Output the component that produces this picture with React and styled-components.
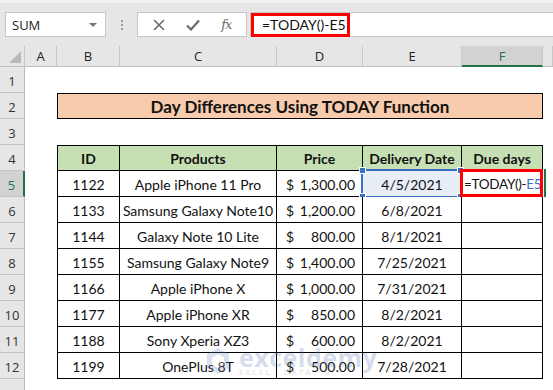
import React from "react";
import styled, { createGlobalStyle } from "styled-components";

const GlobalStyle = createGlobalStyle`
  body {
    margin: 0;
    background: #fff;
    font-family: "Lato", "Liberation Sans", sans-serif;
  }
`;

const COLS = "25px 32px 63px 157px 86px 99px 81px 1fr";

const items = [
  [1122, "Apple iPhone 11 Pro", "1,300.00", "4/5/2021"],
  [1133, "Samsung Galaxy Note10", "1,200.00", "6/8/2021"],
  [1144, "Galaxy Note 10 Lite", "800.00", "8/1/2021"],
  [1155, "Samsung Galaxy Note9", "1,400.00", "7/25/2021"],
  [1166, "Apple iPhone X", "1,000.00", "7/31/2021"],
  [1177, "Apple iPhone XR", "850.00", "8/2/2021"],
  [1188, "Sony Xperia XZ3", "600.00", "8/2/2021"],
  [1199, "OnePlus 8T", "500.00", "7/28/2021"]
];

const Page = styled.div`
  width: 553px;
  height: 390px;
  overflow: hidden;
  display: flex;
  flex-direction: column;
  background: #fff;
`;

const Toolbar = styled.div`
  height: 46px;
  flex: none;
  box-sizing: border-box;
  display: flex;
  align-items: flex-start;
  padding: 9px 0 0 5px;
  background: #e6e6e6;
  border-top: 3px solid #f3f3f3;
`;

const NameBox = styled.div`
  width: 101px;
  height: 25px;
  box-sizing: border-box;
  background: #fff;
  border: 1px solid #c6c6c6;
  display: flex;
  align-items: center;
  justify-content: space-between;
  padding: 0 8px 0 6px;
  font-family: "Open Sans", sans-serif;
  font-size: 13px;
  color: #222;
`;

const Caret = styled.span`
  width: 0;
  height: 0;
  border-left: 4px solid transparent;
  border-right: 4px solid transparent;
  border-top: 4px solid #777;
`;

const Grip = styled.div`
  width: 31px;
  height: 25px;
  display: flex;
  flex-direction: column;
  align-items: center;
  justify-content: center;
  gap: 2px;
  span {
    width: 2px;
    height: 2px;
    background: #9a9a9a;
  }
`;

const ButtonBox = styled.div`
  width: 110px;
  height: 25px;
  box-sizing: border-box;
  background: #fff;
  border: 1px solid #c6c6c6;
  display: flex;
  align-items: center;
  justify-content: space-around;
  padding: 0 4px;
  color: #6b6b6b;
`;

const Fx = styled.span`
  font-family: "DejaVu Serif", "Liberation Serif", serif;
  font-style: italic;
  font-size: 13px;
  color: #6b6b6b;
  letter-spacing: -1px;
`;

const FormulaBar = styled.div`
  flex: 1;
  margin-left: 3px;
  height: 25px;
  box-sizing: border-box;
  background: #fff;
  border: 1px solid #c6c6c6;
  border-right: none;
  display: flex;
  align-items: center;
`;

const Highlight = styled.div`
  width: 99px;
  height: 24px;
  box-sizing: border-box;
  border: 3px solid #ff0000;
  display: flex;
  align-items: center;
  padding-left: 8px;
  font-size: 14px;
  white-space: nowrap;
  color: #111;
`;

const Sheet = styled.div`
  position: relative;
  flex: 1;
`;

const Row = styled.div`
  display: grid;
  grid-template-columns: ${COLS};
  height: ${p => (p.$head ? 21 : 26)}px;
`;

const Corner = styled.div`
  background: #e6e6e6;
  border-right: 1px solid #c8c8c8;
  border-bottom: 1px solid #bdbdbd;
  position: relative;
  &:after {
    content: "";
    position: absolute;
    right: 3px;
    bottom: 3px;
    border-left: 12px solid transparent;
    border-bottom: 12px solid #b9b9b9;
  }
`;

const ColHead = styled.div`
  background: ${p => (p.$active ? "#d2d2d2" : "#e6e6e6")};
  border-right: 1px solid #c8c8c8;
  border-bottom: ${p => (p.$active ? "2px solid #217346" : "1px solid #bdbdbd")};
  display: flex;
  align-items: center;
  justify-content: center;
  font-family: "Open Sans", sans-serif;
  font-size: 13px;
  color: ${p => (p.$active ? "#217346" : "#222")};
`;

const RowHead = styled.div`
  background: ${p => (p.$active ? "#d2d2d2" : "#e6e6e6")};
  border-right: ${p => (p.$active ? "2px solid #217346" : "1px solid #bdbdbd")};
  border-bottom: 1px solid #c4c4c4;
  display: flex;
  align-items: center;
  justify-content: center;
  padding-top: 2px;
  font-family: "Open Sans", sans-serif;
  font-size: 13px;
  color: ${p => (p.$active ? "#217346" : "#333")};
`;

const Blank = styled.div``;

const Title = styled.div`
  grid-column: span 5;
  background: #f8cbad;
  border: 1px solid #000;
  display: flex;
  align-items: center;
  justify-content: center;
  font-weight: 700;
  font-size: 17px;
  color: #111;
`;

const Cell = styled.div`
  position: relative;
  display: flex;
  align-items: center;
  justify-content: ${p => p.$align || "center"};
  padding: 1px ${p => (p.$align ? "7px 0 9px" : "4px 0")};
  border-right: 1px solid #000;
  border-bottom: 1px solid #000;
  border-left: ${p => (p.$first ? "1px solid #000" : "none")};
  border-top: ${p => (p.$top ? "1px solid #000" : "none")};
  background: ${p => (p.$head ? "#c6e0b4" : p.$selected ? "#e8eef8" : "#fff")};
  font-weight: ${p => (p.$head ? 700 : 400)};
  font-size: 14px;
  color: #111;
  white-space: nowrap;
`;

const Selection = styled.div`
  position: absolute;
  left: -2px;
  top: -2px;
  right: -1px;
  bottom: -2px;
  border: 2px solid #3a6fc6;
  pointer-events: none;
`;

const Handle = styled.span`
  position: absolute;
  width: 5px;
  height: 5px;
  background: #3a6fc6;
  border: 1px solid #fff;
  ${p => (p.$top ? "top: -4px;" : "bottom: -4px;")}
  ${p => (p.$left ? "left: -4px;" : "right: -4px;")}
`;

const FormulaCell = styled(Cell)`
  justify-content: flex-start;
  padding: 1px 0 0 2px;
  font-size: 13.5px;
  letter-spacing: -0.3px;
  overflow: visible;
  &:before {
    content: "";
    position: absolute;
    left: -2px;
    top: -2px;
    right: -1px;
    bottom: -1px;
    border: 3px solid #ff0000;
  }
  &:after {
    content: "";
    position: absolute;
    right: -4px;
    top: -2px;
    bottom: -1px;
    width: 2px;
    background: #217346;
  }
`;

const Ref = styled.span`
  color: #3b6ec4;
`;

const Watermark = styled.div`
  position: absolute;
  left: 205px;
  top: 299px;
  display: flex;
  align-items: center;
  gap: 8px;
  opacity: 0.25;
  pointer-events: none;
`;

const Brand = styled.div`
  display: flex;
  flex-direction: column;
  line-height: 1;
  color: #5a7db5;
  b {
    font-family: "Open Sans", sans-serif;
    font-size: 25px;
    font-weight: 700;
    letter-spacing: 0.5px;
  }
  span {
    font-family: "Open Sans", sans-serif;
    font-size: 8px;
    letter-spacing: 2px;
    color: #777;
    margin-top: -2px;
  }
`;

const letters = ["A", "B", "C", "D", "E", "F", ""];

function DataRow({ n, item, header }) {
  if (header) {
    return (
      <Row>
        <RowHead>{n}</RowHead>
        <Blank />
        <Cell $head $first $top>ID</Cell>
        <Cell $head $top>Products</Cell>
        <Cell $head $top>Price</Cell>
        <Cell $head $top>Delivery Date</Cell>
        <Cell $head $top>Due days</Cell>
        <Blank />
      </Row>
    );
  }
  const [id, name, price, date] = item;
  const active = n === 5;
  return (
    <Row>
      <RowHead $active={active}>{n}</RowHead>
      <Blank />
      <Cell $first>{id}</Cell>
      <Cell>{name}</Cell>
      <Cell $align="space-between">
        <span>$</span>
        <span>{price}</span>
      </Cell>
      <Cell $selected={active}>
        {date}
        {active && (
          <Selection>
            <Handle $top $left />
            <Handle $top />
            <Handle $left />
            <Handle />
          </Selection>
        )}
      </Cell>
      {active ? (
        <FormulaCell>
          =TODAY()-<Ref>E5</Ref>
        </FormulaCell>
      ) : (
        <Cell />
      )}
      <Blank />
    </Row>
  );
}

export default function App() {
  return (
    <Page>
      <GlobalStyle />
      <Toolbar>
        <NameBox>
          SUM
          <Caret />
        </NameBox>
        <Grip>
          <span />
          <span />
          <span />
        </Grip>
        <ButtonBox>
          <svg width="12" height="12" viewBox="0 0 12 12">
            <path d="M1 1l10 10M11 1L1 11" stroke="currentColor" strokeWidth="1.6" />
          </svg>
          <svg width="14" height="12" viewBox="0 0 14 12">
            <path d="M1 6.5l4 4L13 1.5" stroke="currentColor" strokeWidth="2.2" fill="none" />
          </svg>
          <Fx>fx</Fx>
        </ButtonBox>
        <FormulaBar>
          <Highlight>=TODAY()-E5</Highlight>
        </FormulaBar>
      </Toolbar>
      <Sheet>
        <Row $head>
          <Corner />
          {letters.map((l, i) => (
            <ColHead key={i} $active={l === "F"}>
              {l}
            </ColHead>
          ))}
        </Row>
        <Row>
          <RowHead>1</RowHead>
        </Row>
        <Row>
          <RowHead>2</RowHead>
          <Blank />
          <Title>Day Differences Using TODAY Function</Title>
        </Row>
        <Row>
          <RowHead>3</RowHead>
        </Row>
        <DataRow n={4} header />
        {items.map((item, i) => (
          <DataRow key={item[0]} n={i + 5} item={item} />
        ))}
        <Row>
          <RowHead />
        </Row>
        <Watermark>
          <svg width="26" height="28" viewBox="0 0 26 28">
            <path d="M13 1l11 6v14l-11 6L2 21V7z" fill="#6b8cc4" />
            <path d="M13 7l6 3.5v7L13 21l-6-3.5v-7z" fill="#fff" />
          </svg>
          <Brand>
            <b>exceldemy</b>
            <span>EXCEL · DATA · BI</span>
          </Brand>
        </Watermark>
      </Sheet>
    </Page>
  );
}
